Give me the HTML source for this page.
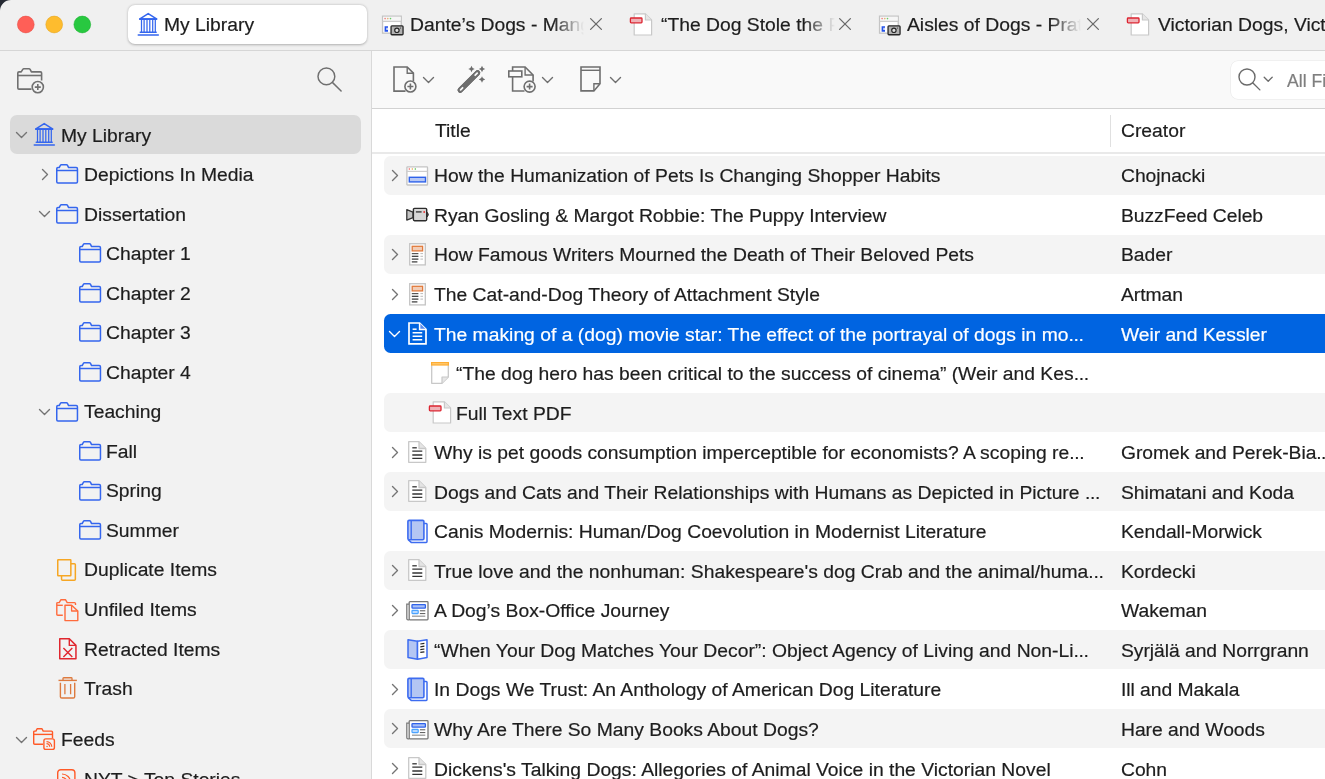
<!DOCTYPE html>
<html><head><meta charset="utf-8"><style>
html,body{margin:0;padding:0;}
body{width:1325px;height:779px;position:relative;overflow:hidden;background:#fff;font-family:"Liberation Sans",sans-serif;}
.t{position:absolute;white-space:nowrap;line-height:24px;transform:scaleX(1.006);transform-origin:0 0;-webkit-text-stroke:0.2px currentColor}
svg{overflow:visible}
</style></head><body>
<div style="position:absolute;left:0;top:0;width:1325px;height:50px;background:#f0f0f0"></div><div style="position:absolute;left:0;top:50px;width:1325px;height:1px;background:#d6d6d6"></div><svg style="position:absolute;left:0;top:0" width="110" height="50"><circle cx="25.8" cy="24.5" r="8.4" fill="#ff5f57" stroke="#e2463f" stroke-width="0.5"/><circle cx="54.2" cy="24.5" r="8.4" fill="#febc2e" stroke="#e1a116" stroke-width="0.5"/><circle cx="82.3" cy="24.5" r="8.4" fill="#28c840" stroke="#14ae2a" stroke-width="0.5"/></svg><div style="position:absolute;left:127.5px;top:4.7px;width:239.5px;height:39.5px;background:#fff;border-radius:7px;box-shadow:0 0.5px 2.5px rgba(0,0,0,0.28)"></div><svg style="position:absolute;left:137px;top:12px" width="23" height="25" viewBox="0 0 23 25" ><path d="M2.9 6.9 L11.2 1.6 L19.5 6.9 Z" fill="none" stroke="#3466ee" stroke-width="1.5" stroke-linejoin="round"/><path d="M2.9 7.1 H19.5" stroke="#3466ee" stroke-width="1.9" stroke-linecap="round"/><path d="M4.5 7.4 V20" stroke="#3466ee" stroke-width="1.25"/><path d="M7.1 7.4 V20" stroke="#3466ee" stroke-width="1.25"/><path d="M10.0 7.4 V20" stroke="#3466ee" stroke-width="1.25"/><path d="M12.8 7.4 V20" stroke="#3466ee" stroke-width="1.25"/><path d="M15.7 7.4 V20" stroke="#3466ee" stroke-width="1.25"/><path d="M18.3 7.4 V20" stroke="#3466ee" stroke-width="1.25"/><path d="M3.2 20.3 H19.2" stroke="#3466ee" stroke-width="1.4" stroke-linecap="round"/><path d="M1.3 23 H21.3" stroke="#3466ee" stroke-width="1.6" stroke-linecap="round"/></svg><div class="t" style="left:164px;top:13.20px;font-size:19.2px;color:#1d1d1d;">My Library</div><svg style="position:absolute;left:380.9px;top:13.5px" width="24" height="22" viewBox="0 0 24 22" ><rect x="1.55" y="2.15" width="18.7" height="17" fill="#fff" stroke="#c4c4c4" stroke-width="1.3"/><rect x="2.2" y="2.8" width="17.4" height="4" fill="#f6f6f6"/><path d="M1.55 7.4 H20.25" stroke="#cbcbcb" stroke-width="1.3"/><circle cx="4.1" cy="4.6" r="0.8" fill="#e77"/><circle cx="6.8" cy="4.6" r="0.8" fill="#e6b070"/><circle cx="9.5" cy="4.6" r="0.8" fill="#6c6"/><path d="M7 13 H4.4 V16.9 H7" fill="#c9d6f8" stroke="#2453ea" stroke-width="1.6"/><rect x="10.05" y="11.95" width="12" height="8.8" rx="0.9" fill="#b2b2b2" stroke="#262626" stroke-width="1.3"/><circle cx="15.9" cy="16.3" r="2.2" fill="#e0e0e0" stroke="#262626" stroke-width="1.2"/><circle cx="19.6" cy="14" r="0.55" fill="#262626"/></svg><div class="t" style="left:409.8px;top:13.20px;font-size:19.2px;color:#1d1d1d;width:173.0px;overflow:hidden;-webkit-mask-image:linear-gradient(90deg,#000 82%,transparent 100%);">Dante’s Dogs - Mango</div><svg style="position:absolute;left:589.0px;top:17.3px" width="14" height="14" viewBox="0 0 14 14" ><path d="M1.6 1.6 L12.4 12.4 M12.4 1.6 L1.6 12.4" stroke="#6a6a6a" stroke-width="1.3" stroke-linecap="round"/></svg><svg style="position:absolute;left:629.4px;top:12.5px" width="24" height="23" viewBox="0 0 24 23" ><path d="M5.2 0.8 H16.4 L22.6 7 V22 H5.2 Z" fill="#fff" stroke="#c8c8c8" stroke-width="1.2" stroke-linejoin="round"/><path d="M16.4 0.8 V7 H22.6" fill="#e6e6e6" stroke="#c8c8c8" stroke-width="1.2" stroke-linejoin="round"/><rect x="1.4" y="5" width="11.6" height="4.8" rx="0.8" fill="#efb1b6" stroke="#dc2430" stroke-width="1.3"/></svg><div class="t" style="left:660.5px;top:13.20px;font-size:19.2px;color:#1d1d1d;width:173.0px;overflow:hidden;-webkit-mask-image:linear-gradient(90deg,#000 82%,transparent 100%);">“The Dog Stole the Film”</div><svg style="position:absolute;left:837.5px;top:17.3px" width="14" height="14" viewBox="0 0 14 14" ><path d="M1.6 1.6 L12.4 12.4 M12.4 1.6 L1.6 12.4" stroke="#6a6a6a" stroke-width="1.3" stroke-linecap="round"/></svg><svg style="position:absolute;left:877.9px;top:13.5px" width="24" height="22" viewBox="0 0 24 22" ><rect x="1.55" y="2.15" width="18.7" height="17" fill="#fff" stroke="#c4c4c4" stroke-width="1.3"/><rect x="2.2" y="2.8" width="17.4" height="4" fill="#f6f6f6"/><path d="M1.55 7.4 H20.25" stroke="#cbcbcb" stroke-width="1.3"/><circle cx="4.1" cy="4.6" r="0.8" fill="#e77"/><circle cx="6.8" cy="4.6" r="0.8" fill="#e6b070"/><circle cx="9.5" cy="4.6" r="0.8" fill="#6c6"/><path d="M7 13 H4.4 V16.9 H7" fill="#c9d6f8" stroke="#2453ea" stroke-width="1.6"/><rect x="10.05" y="11.95" width="12" height="8.8" rx="0.9" fill="#b2b2b2" stroke="#262626" stroke-width="1.3"/><circle cx="15.9" cy="16.3" r="2.2" fill="#e0e0e0" stroke="#262626" stroke-width="1.2"/><circle cx="19.6" cy="14" r="0.55" fill="#262626"/></svg><div class="t" style="left:906.8px;top:13.20px;font-size:19.2px;color:#1d1d1d;width:173.0px;overflow:hidden;-webkit-mask-image:linear-gradient(90deg,#000 82%,transparent 100%);">Aisles of Dogs - Pratt</div><svg style="position:absolute;left:1086.0px;top:17.3px" width="14" height="14" viewBox="0 0 14 14" ><path d="M1.6 1.6 L12.4 12.4 M12.4 1.6 L1.6 12.4" stroke="#6a6a6a" stroke-width="1.3" stroke-linecap="round"/></svg><svg style="position:absolute;left:1126.4px;top:12.5px" width="24" height="23" viewBox="0 0 24 23" ><path d="M5.2 0.8 H16.4 L22.6 7 V22 H5.2 Z" fill="#fff" stroke="#c8c8c8" stroke-width="1.2" stroke-linejoin="round"/><path d="M16.4 0.8 V7 H22.6" fill="#e6e6e6" stroke="#c8c8c8" stroke-width="1.2" stroke-linejoin="round"/><rect x="1.4" y="5" width="11.6" height="4.8" rx="0.8" fill="#efb1b6" stroke="#dc2430" stroke-width="1.3"/></svg><div class="t" style="left:1157.5px;top:13.20px;font-size:19.2px;color:#1d1d1d;width:248.5px;overflow:hidden;">Victorian Dogs, Victorian Pets</div><div style="position:absolute;left:0;top:51px;width:371px;height:728px;background:#f2f2f2"></div><div style="position:absolute;left:371px;top:51px;width:1px;height:728px;background:#d9d9d9"></div><svg style="position:absolute;left:16.9px;top:67.9px" width="28" height="27" viewBox="0 0 28 27" ><path d="M14.5 21.1 H2 Q0.8 21.1 0.8 19.9 V5.1 Q0.8 3.9 2 3.9 H4.2 L5.8 1.4 Q6.2 0.8 6.9 0.8 H12 Q12.7 0.8 13.1 1.4 L14.4 3.9 H23.4 Q24.6 3.9 24.6 5.1 V12.5" fill="none" stroke="#707070" stroke-width="1.6" stroke-linejoin="round"/><path d="M0.8 7.5 H24.6" stroke="#707070" stroke-width="1.6"/><circle cx="20.8" cy="19.1" r="5.6" fill="#f2f2f2" stroke="#707070" stroke-width="1.6"/><path d="M20.8 16.1 V22.1 M17.8 19.1 H23.8" stroke="#707070" stroke-width="1.6"/></svg><svg style="position:absolute;left:316.8px;top:66.5px" width="27" height="27" viewBox="0 0 27 27" ><circle cx="9.4" cy="9.4" r="8.4" fill="none" stroke="#6f6f6f" stroke-width="1.45"/><path d="M15.364 15.364 L24.1 24.1" stroke="#6f6f6f" stroke-width="1.45" stroke-linecap="round"/></svg><div style="position:absolute;left:10.3px;top:115.1px;width:350.5px;height:38.5px;background:#dadada;border-radius:7px"></div><svg style="position:absolute;left:14.95px;top:130.95px" width="13" height="8" viewBox="0 0 13 8" ><path d="M1.5 1.5 L6.5 6.5 L11.5 1.5" fill="none" stroke="#747474" stroke-width="1.4" stroke-linecap="round" stroke-linejoin="round"/></svg><svg style="position:absolute;left:33.4px;top:122.3px" width="23" height="25" viewBox="0 0 23 25" ><path d="M2.9 6.9 L11.2 1.6 L19.5 6.9 Z" fill="none" stroke="#3466ee" stroke-width="1.5" stroke-linejoin="round"/><path d="M2.9 7.1 H19.5" stroke="#3466ee" stroke-width="1.9" stroke-linecap="round"/><path d="M4.5 7.4 V20" stroke="#3466ee" stroke-width="1.25"/><path d="M7.1 7.4 V20" stroke="#3466ee" stroke-width="1.25"/><path d="M10.0 7.4 V20" stroke="#3466ee" stroke-width="1.25"/><path d="M12.8 7.4 V20" stroke="#3466ee" stroke-width="1.25"/><path d="M15.7 7.4 V20" stroke="#3466ee" stroke-width="1.25"/><path d="M18.3 7.4 V20" stroke="#3466ee" stroke-width="1.25"/><path d="M3.2 20.3 H19.2" stroke="#3466ee" stroke-width="1.4" stroke-linecap="round"/><path d="M1.3 23 H21.3" stroke="#3466ee" stroke-width="1.6" stroke-linecap="round"/></svg><div class="t" style="left:61.05px;top:123.50px;font-size:19.2px;color:#1d1d1d;">My Library</div><svg style="position:absolute;left:40.7px;top:167.64px" width="8" height="13" viewBox="0 0 8 13" ><path d="M1.5 1.5 L6.5 6.5 L1.5 11.5" fill="none" stroke="#747474" stroke-width="1.4" stroke-linecap="round" stroke-linejoin="round"/></svg><svg style="position:absolute;left:56.0px;top:164.29px" width="23" height="20" viewBox="0 0 23 20" ><path d="M0.75 4.8 Q0.75 3.6 1.95 3.6 H3.2 L4.4 1.4 Q4.75 0.75 5.4 0.75 H10.5 Q11.15 0.75 11.5 1.4 L12.6 3.6 H20.25 Q21.45 3.6 21.45 4.8 V17.75 Q21.45 18.95 20.25 18.95 H1.95 Q0.75 18.95 0.75 17.75 Z" fill="none" stroke="#3466ee" stroke-width="1.5" stroke-linejoin="round"/><path d="M0.75 6.5 H21.45" stroke="#3466ee" stroke-width="1.5"/></svg><div class="t" style="left:83.6px;top:163.04px;font-size:19.2px;color:#1d1d1d;">Depictions In Media</div><svg style="position:absolute;left:37.65px;top:210.02999999999997px" width="13" height="8" viewBox="0 0 13 8" ><path d="M1.5 1.5 L6.5 6.5 L11.5 1.5" fill="none" stroke="#747474" stroke-width="1.4" stroke-linecap="round" stroke-linejoin="round"/></svg><svg style="position:absolute;left:56.0px;top:203.82999999999998px" width="23" height="20" viewBox="0 0 23 20" ><path d="M0.75 4.8 Q0.75 3.6 1.95 3.6 H3.2 L4.4 1.4 Q4.75 0.75 5.4 0.75 H10.5 Q11.15 0.75 11.5 1.4 L12.6 3.6 H20.25 Q21.45 3.6 21.45 4.8 V17.75 Q21.45 18.95 20.25 18.95 H1.95 Q0.75 18.95 0.75 17.75 Z" fill="none" stroke="#3466ee" stroke-width="1.5" stroke-linejoin="round"/><path d="M0.75 6.5 H21.45" stroke="#3466ee" stroke-width="1.5"/></svg><div class="t" style="left:83.6px;top:202.58px;font-size:19.2px;color:#1d1d1d;">Dissertation</div><svg style="position:absolute;left:78.69999999999999px;top:243.37px" width="23" height="20" viewBox="0 0 23 20" ><path d="M0.75 4.8 Q0.75 3.6 1.95 3.6 H3.2 L4.4 1.4 Q4.75 0.75 5.4 0.75 H10.5 Q11.15 0.75 11.5 1.4 L12.6 3.6 H20.25 Q21.45 3.6 21.45 4.8 V17.75 Q21.45 18.95 20.25 18.95 H1.95 Q0.75 18.95 0.75 17.75 Z" fill="none" stroke="#3466ee" stroke-width="1.5" stroke-linejoin="round"/><path d="M0.75 6.5 H21.45" stroke="#3466ee" stroke-width="1.5"/></svg><div class="t" style="left:106.15px;top:242.12px;font-size:19.2px;color:#1d1d1d;">Chapter 1</div><svg style="position:absolute;left:78.69999999999999px;top:282.90999999999997px" width="23" height="20" viewBox="0 0 23 20" ><path d="M0.75 4.8 Q0.75 3.6 1.95 3.6 H3.2 L4.4 1.4 Q4.75 0.75 5.4 0.75 H10.5 Q11.15 0.75 11.5 1.4 L12.6 3.6 H20.25 Q21.45 3.6 21.45 4.8 V17.75 Q21.45 18.95 20.25 18.95 H1.95 Q0.75 18.95 0.75 17.75 Z" fill="none" stroke="#3466ee" stroke-width="1.5" stroke-linejoin="round"/><path d="M0.75 6.5 H21.45" stroke="#3466ee" stroke-width="1.5"/></svg><div class="t" style="left:106.15px;top:281.66px;font-size:19.2px;color:#1d1d1d;">Chapter 2</div><svg style="position:absolute;left:78.69999999999999px;top:322.45px" width="23" height="20" viewBox="0 0 23 20" ><path d="M0.75 4.8 Q0.75 3.6 1.95 3.6 H3.2 L4.4 1.4 Q4.75 0.75 5.4 0.75 H10.5 Q11.15 0.75 11.5 1.4 L12.6 3.6 H20.25 Q21.45 3.6 21.45 4.8 V17.75 Q21.45 18.95 20.25 18.95 H1.95 Q0.75 18.95 0.75 17.75 Z" fill="none" stroke="#3466ee" stroke-width="1.5" stroke-linejoin="round"/><path d="M0.75 6.5 H21.45" stroke="#3466ee" stroke-width="1.5"/></svg><div class="t" style="left:106.15px;top:321.20px;font-size:19.2px;color:#1d1d1d;">Chapter 3</div><svg style="position:absolute;left:78.69999999999999px;top:361.99px" width="23" height="20" viewBox="0 0 23 20" ><path d="M0.75 4.8 Q0.75 3.6 1.95 3.6 H3.2 L4.4 1.4 Q4.75 0.75 5.4 0.75 H10.5 Q11.15 0.75 11.5 1.4 L12.6 3.6 H20.25 Q21.45 3.6 21.45 4.8 V17.75 Q21.45 18.95 20.25 18.95 H1.95 Q0.75 18.95 0.75 17.75 Z" fill="none" stroke="#3466ee" stroke-width="1.5" stroke-linejoin="round"/><path d="M0.75 6.5 H21.45" stroke="#3466ee" stroke-width="1.5"/></svg><div class="t" style="left:106.15px;top:360.74px;font-size:19.2px;color:#1d1d1d;">Chapter 4</div><svg style="position:absolute;left:37.65px;top:407.72999999999996px" width="13" height="8" viewBox="0 0 13 8" ><path d="M1.5 1.5 L6.5 6.5 L11.5 1.5" fill="none" stroke="#747474" stroke-width="1.4" stroke-linecap="round" stroke-linejoin="round"/></svg><svg style="position:absolute;left:56.0px;top:401.53px" width="23" height="20" viewBox="0 0 23 20" ><path d="M0.75 4.8 Q0.75 3.6 1.95 3.6 H3.2 L4.4 1.4 Q4.75 0.75 5.4 0.75 H10.5 Q11.15 0.75 11.5 1.4 L12.6 3.6 H20.25 Q21.45 3.6 21.45 4.8 V17.75 Q21.45 18.95 20.25 18.95 H1.95 Q0.75 18.95 0.75 17.75 Z" fill="none" stroke="#3466ee" stroke-width="1.5" stroke-linejoin="round"/><path d="M0.75 6.5 H21.45" stroke="#3466ee" stroke-width="1.5"/></svg><div class="t" style="left:83.6px;top:400.28px;font-size:19.2px;color:#1d1d1d;">Teaching</div><svg style="position:absolute;left:78.69999999999999px;top:441.07px" width="23" height="20" viewBox="0 0 23 20" ><path d="M0.75 4.8 Q0.75 3.6 1.95 3.6 H3.2 L4.4 1.4 Q4.75 0.75 5.4 0.75 H10.5 Q11.15 0.75 11.5 1.4 L12.6 3.6 H20.25 Q21.45 3.6 21.45 4.8 V17.75 Q21.45 18.95 20.25 18.95 H1.95 Q0.75 18.95 0.75 17.75 Z" fill="none" stroke="#3466ee" stroke-width="1.5" stroke-linejoin="round"/><path d="M0.75 6.5 H21.45" stroke="#3466ee" stroke-width="1.5"/></svg><div class="t" style="left:106.15px;top:439.82px;font-size:19.2px;color:#1d1d1d;">Fall</div><svg style="position:absolute;left:78.69999999999999px;top:480.61px" width="23" height="20" viewBox="0 0 23 20" ><path d="M0.75 4.8 Q0.75 3.6 1.95 3.6 H3.2 L4.4 1.4 Q4.75 0.75 5.4 0.75 H10.5 Q11.15 0.75 11.5 1.4 L12.6 3.6 H20.25 Q21.45 3.6 21.45 4.8 V17.75 Q21.45 18.95 20.25 18.95 H1.95 Q0.75 18.95 0.75 17.75 Z" fill="none" stroke="#3466ee" stroke-width="1.5" stroke-linejoin="round"/><path d="M0.75 6.5 H21.45" stroke="#3466ee" stroke-width="1.5"/></svg><div class="t" style="left:106.15px;top:479.36px;font-size:19.2px;color:#1d1d1d;">Spring</div><svg style="position:absolute;left:78.69999999999999px;top:520.15px" width="23" height="20" viewBox="0 0 23 20" ><path d="M0.75 4.8 Q0.75 3.6 1.95 3.6 H3.2 L4.4 1.4 Q4.75 0.75 5.4 0.75 H10.5 Q11.15 0.75 11.5 1.4 L12.6 3.6 H20.25 Q21.45 3.6 21.45 4.8 V17.75 Q21.45 18.95 20.25 18.95 H1.95 Q0.75 18.95 0.75 17.75 Z" fill="none" stroke="#3466ee" stroke-width="1.5" stroke-linejoin="round"/><path d="M0.75 6.5 H21.45" stroke="#3466ee" stroke-width="1.5"/></svg><div class="t" style="left:106.15px;top:518.90px;font-size:19.2px;color:#1d1d1d;">Summer</div><svg style="position:absolute;left:57.35px;top:558.5400000000001px" width="20" height="22" viewBox="0 0 20 22" ><path d="M13.85 4.75 H17.35 Q18.35 4.75 18.35 5.75 V20.25 Q18.35 21.25 17.35 21.25 H5.55 Q4.55 21.25 4.55 20.25 V16.75" fill="none" stroke="#f6a623" stroke-width="1.5"/><rect x="0.75" y="0.75" width="13.1" height="16" rx="0.5" fill="none" stroke="#f6a623" stroke-width="1.5"/></svg><div class="t" style="left:83.6px;top:558.44px;font-size:19.2px;color:#1d1d1d;">Duplicate Items</div><svg style="position:absolute;left:56px;top:598.78px" width="23" height="23" viewBox="0 0 23 23" ><path d="M6.8 16.2 H1.8 Q0.8 16.2 0.8 15.2 V4.6 Q0.8 3.6 1.8 3.6 H3.2 L4.8 0.8 H9.6 L11.2 3.6 H18.5 Q19.5 3.6 19.5 4.6 V6" fill="none" stroke="#ff6b3d" stroke-width="1.4" stroke-linejoin="round"/><path d="M0.8 6.3 H6.8" stroke="#ff6b3d" stroke-width="1.4"/><path d="M9 6.2 H15.6 L21.8 12 V21.6 H9 Z" fill="none" stroke="#ff6b3d" stroke-width="1.4" stroke-linejoin="round"/><path d="M15.6 6.2 V12 H21.8" fill="none" stroke="#ff6b3d" stroke-width="1.3" stroke-linejoin="round"/></svg><div class="t" style="left:83.6px;top:597.98px;font-size:19.2px;color:#1d1d1d;">Unfiled Items</div><svg style="position:absolute;left:58.75px;top:637.77px" width="18" height="22" viewBox="0 0 18 22" ><path d="M0.75 0.75 H10.3 L16.95 7.4 V20.85 H0.75 Z" fill="none" stroke="#e0262e" stroke-width="1.5" stroke-linejoin="round"/><path d="M10.3 0.75 V7.4 H16.95" fill="none" stroke="#e0262e" stroke-width="1.4" stroke-linejoin="round"/><path d="M4.4 10.1 L13.3 19 M13.3 10.1 L4.4 19" stroke="#e0262e" stroke-width="1.4"/></svg><div class="t" style="left:83.6px;top:637.52px;font-size:19.2px;color:#1d1d1d;">Retracted Items</div><svg style="position:absolute;left:57.8px;top:677.16px" width="20" height="22" viewBox="0 0 20 22" ><path d="M0.5 3.4 H18.9" stroke="#dd7a3e" stroke-width="1.4"/><path d="M5 3.4 V1.45 Q5 0.75 5.7 0.75 H13.3 Q14 0.75 14 1.45 V3.4" fill="none" stroke="#dd7a3e" stroke-width="1.3"/><path d="M2.4 5.8 V19.65 Q2.4 21.05 3.8 21.05 H15.3 Q16.7 21.05 16.7 19.65 V5.8" fill="none" stroke="#dd7a3e" stroke-width="1.4"/><path d="M6.9 6.9 V17.2 M12.6 6.9 V17.2" stroke="#dd7a3e" stroke-width="1.3"/></svg><div class="t" style="left:83.6px;top:677.06px;font-size:19.2px;color:#1d1d1d;">Trash</div><svg style="position:absolute;left:14.95px;top:735.5500000000001px" width="13" height="8" viewBox="0 0 13 8" ><path d="M1.5 1.5 L6.5 6.5 L11.5 1.5" fill="none" stroke="#747474" stroke-width="1.4" stroke-linecap="round" stroke-linejoin="round"/></svg><svg style="position:absolute;left:32.5px;top:728.1px" width="23" height="23" viewBox="0 0 23 23" ><path d="M10 16.3 H1.8 Q0.7 16.3 0.7 15.2 V4.1 Q0.7 3.1 1.8 3.1 H2.9 L4.1 0.7 H9 L10.2 3.1 H18.4 Q19.5 3.1 19.5 4.1 V10.2" fill="none" stroke="#ff5a28" stroke-width="1.4" stroke-linejoin="round"/><path d="M0.7 6.4 H19.5" stroke="#ff5a28" stroke-width="1.4"/><rect x="10.9" y="10.9" width="10.5" height="10.5" rx="1.89" fill="#f2f2f2" stroke="#ff5a28" stroke-width="1.4"/><circle cx="14.05" cy="18.46" r="0.7350000000000001" fill="#ff5a28"/><path d="M13.525 15.625 A3.15 3.15 0 0 1 16.675 18.775" fill="none" stroke="#ff5a28" stroke-width="1.2"/><path d="M13.525 13.525 A5.25 5.25 0 0 1 18.775 18.775" fill="none" stroke="#ff5a28" stroke-width="1.2"/></svg><div class="t" style="left:61.05px;top:728.10px;font-size:19.2px;color:#1d1d1d;">Feeds</div><svg style="position:absolute;left:57.4px;top:769.14px" width="20" height="20" viewBox="0 0 20 20" ><rect x="0.7" y="0.7" width="17.2" height="17.2" rx="3.0959999999999996" fill="#f2f2f2" stroke="#ff5a28" stroke-width="1.4"/><circle cx="5.859999999999999" cy="13.083999999999998" r="1.204" fill="#ff5a28"/><path d="M5.0 8.44 A5.159999999999999 5.159999999999999 0 0 1 10.16 13.599999999999998" fill="none" stroke="#ff5a28" stroke-width="1.2"/><path d="M5.0 5.0 A8.6 8.6 0 0 1 13.599999999999998 13.599999999999998" fill="none" stroke="#ff5a28" stroke-width="1.2"/></svg><div class="t" style="left:83.6px;top:767.64px;font-size:19.2px;color:#1d1d1d;">NYT &gt; Top Stories</div><div style="position:absolute;left:372px;top:51px;width:953px;height:57px;background:#f9f9f9"></div><div style="position:absolute;left:372px;top:107.8px;width:953px;height:1px;background:#d2d2d2"></div><div style="position:absolute;left:372px;top:108.5px;width:953px;height:671px;background:#fff"></div><div style="position:absolute;left:372px;top:152px;width:953px;height:2px;background:#e9e9e9"></div><svg style="position:absolute;left:393px;top:66.3px" width="24" height="27" viewBox="0 0 24 27" ><path d="M12.5 25.1 H1 V1 H14.2 L20.4 7.2 V15" fill="none" stroke="#6e6e6e" stroke-width="1.6" stroke-linejoin="miter"/><path d="M14.2 1 V7.2 H20.4" fill="none" stroke="#6e6e6e" stroke-width="1.4"/><circle cx="17.4" cy="20.5" r="5.5" fill="#f9f9f9" stroke="#6e6e6e" stroke-width="1.6"/><path d="M17.4 17.5 V23.5 M14.4 20.5 H20.4" stroke="#6e6e6e" stroke-width="1.6"/></svg><svg style="position:absolute;left:422px;top:75.5px" width="13" height="8" viewBox="0 0 13 8" ><path d="M1.5 1.5 L6.5 6.5 L11.5 1.5" fill="none" stroke="#6e6e6e" stroke-width="1.4" stroke-linecap="round" stroke-linejoin="round"/></svg><svg style="position:absolute;left:458px;top:65.5px" width="28" height="27" viewBox="0 0 28 27" ><path d="M13.5 -0.20000000000000018 Q14.0 2.5 16.7 3 Q14.0 3.5 13.5 6.2 Q13.0 3.5 10.3 3 Q13.0 2.5 13.5 -0.20000000000000018 Z" fill="#6e6e6e"/><path d="M2.2 24.2 L19.6 6.8" stroke="#6e6e6e" stroke-width="5.2" stroke-linecap="round"/><path d="M2.6 23.8 L4.6 21.8 M17.2 9.2 L19.2 7.2" stroke="#f9f9f9" stroke-width="1.8" stroke-linecap="round"/><path d="M24 -0.20000000000000018 Q24.5 2.5 27.2 3 Q24.5 3.5 24 6.2 Q23.5 3.5 20.8 3 Q23.5 2.5 24 -0.20000000000000018 Z" fill="#6e6e6e"/><path d="M2.2 24.2 L19.6 6.8" stroke="#6e6e6e" stroke-width="5.2" stroke-linecap="round"/><path d="M2.6 23.8 L4.6 21.8 M17.2 9.2 L19.2 7.2" stroke="#f9f9f9" stroke-width="1.8" stroke-linecap="round"/><path d="M24 10.3 Q24.5 13.0 27.2 13.5 Q24.5 14.0 24 16.7 Q23.5 14.0 20.8 13.5 Q23.5 13.0 24 10.3 Z" fill="#6e6e6e"/></svg><svg style="position:absolute;left:507.5px;top:66.3px" width="28" height="27" viewBox="0 0 28 27" ><path d="M16.5 25 H4.6 V1 H17.1 L25.1 9 V15.5" fill="none" stroke="#6e6e6e" stroke-width="1.6"/><path d="M17.1 1 V9 H25.1" fill="none" stroke="#6e6e6e" stroke-width="1.4"/><rect x="0.8" y="5" width="13" height="5.8" fill="#f9f9f9" stroke="#6e6e6e" stroke-width="1.6"/><circle cx="21.6" cy="20.6" r="5.5" fill="#f9f9f9" stroke="#6e6e6e" stroke-width="1.6"/><path d="M21.6 17.6 V23.6 M18.6 20.6 H24.6" stroke="#6e6e6e" stroke-width="1.6"/></svg><svg style="position:absolute;left:541px;top:75.5px" width="13" height="8" viewBox="0 0 13 8" ><path d="M1.5 1.5 L6.5 6.5 L11.5 1.5" fill="none" stroke="#6e6e6e" stroke-width="1.4" stroke-linecap="round" stroke-linejoin="round"/></svg><svg style="position:absolute;left:579.7px;top:66.3px" width="21" height="26" viewBox="0 0 21 26" ><path d="M13.9 24.9 H1 V1 H20 V17.8 Z" fill="none" stroke="#6e6e6e" stroke-width="1.6" stroke-linejoin="miter"/><path d="M1 4.3 H20" stroke="#6e6e6e" stroke-width="1.4"/><path d="M13.9 24.9 V17.8 H20" fill="none" stroke="#6e6e6e" stroke-width="1.4"/></svg><svg style="position:absolute;left:609px;top:75.5px" width="13" height="8" viewBox="0 0 13 8" ><path d="M1.5 1.5 L6.5 6.5 L11.5 1.5" fill="none" stroke="#6e6e6e" stroke-width="1.4" stroke-linecap="round" stroke-linejoin="round"/></svg><div style="position:absolute;left:1231px;top:60.5px;width:120px;height:38px;background:#fff;border-radius:7px;box-shadow:0 0 0 0.6px #e8e8e8"></div><svg style="position:absolute;left:1238px;top:67.5px" width="24" height="24" viewBox="0 0 24 24" ><circle cx="9.0" cy="9.0" r="8.0" fill="none" stroke="#6a6a6a" stroke-width="1.4"/><path d="M14.68 14.68 L21.88 21.88" stroke="#6a6a6a" stroke-width="1.4" stroke-linecap="round"/></svg><svg style="position:absolute;left:1263px;top:76px" width="11" height="7" viewBox="0 0 11 7" ><path d="M1.2 1.2 L5.2 5.2 L9.2 1.2" fill="none" stroke="#6a6a6a" stroke-width="1.3" stroke-linecap="round" stroke-linejoin="round"/></svg><div class="t" style="left:1287px;top:69.12px;font-size:17.5px;color:#7f7f7f;">All Fields &amp; Tags</div><div class="t" style="left:434.5px;top:119.10px;font-size:19.2px;color:#1d1d1d;">Title</div><div style="position:absolute;left:1109.5px;top:115px;width:1px;height:32px;background:#e0e0e0"></div><div class="t" style="left:1121.2px;top:119.20px;font-size:19.2px;color:#1d1d1d;">Creator</div><div style="position:absolute;left:384px;top:156.30px;width:960px;height:38.9px;background:#f4f4f4;border-radius:6.5px"></div><svg style="position:absolute;left:391.2px;top:169.1px" width="8" height="13" viewBox="0 0 8 13" ><path d="M1.5 1.5 L6.5 6.5 L1.5 11.5" fill="none" stroke="#747474" stroke-width="1.4" stroke-linecap="round" stroke-linejoin="round"/></svg><svg style="position:absolute;left:405.5px;top:165.7px" width="23" height="20" viewBox="0 0 23 20" ><rect x="0.9" y="0.9" width="20.6" height="18.1" rx="0.6" fill="#fff" stroke="#c4c4c4" stroke-width="1.3"/><path d="M0.9 5.4 H21.5" stroke="#cdcdcd" stroke-width="1.2"/><circle cx="3.3" cy="3.1" r="0.75" fill="#e55"/><circle cx="6.3" cy="3.1" r="0.75" fill="#eaa040"/><circle cx="9.3" cy="3.1" r="0.75" fill="#4b4"/><rect x="3.3" y="11.3" width="16.2" height="4.6" fill="#b7c8f5" stroke="#2e62ea" stroke-width="1.4"/></svg><div class="t" style="left:434.3px;top:164.30px;font-size:19.2px;color:#1d1d1d;width:669.7px;overflow:hidden;">How the Humanization of Pets Is Changing Shopper Habits</div><div class="t" style="left:1121px;top:164.30px;font-size:19.2px;color:#1d1d1d;letter-spacing:-0.05px;">Chojnacki</div><svg style="position:absolute;left:405.5px;top:208.3px" width="24" height="14" viewBox="0 0 24 14" ><path d="M0.8 1.7 L7 4.2 V9.7 L0.8 12.1 Z" fill="#c4c4c4" stroke="#333" stroke-width="1.3" stroke-linejoin="round"/><rect x="7.4" y="0.4" width="13.3" height="12.3" rx="1.1" fill="#d6d6d6" stroke="#2c2c2c" stroke-width="1.4"/><path d="M9.9 3.9 H15.6" stroke="#444" stroke-width="1.5"/><circle cx="18.2" cy="4" r="0.9" fill="#e33"/><path d="M21.3 4.3 Q23.6 6.6 21.3 8.9 Z" fill="#2c2c2c" stroke="#2c2c2c" stroke-width="0.8"/></svg><div class="t" style="left:434.3px;top:203.85px;font-size:19.2px;color:#1d1d1d;width:669.7px;overflow:hidden;">Ryan Gosling &amp; Margot Robbie: The Puppy Interview</div><div class="t" style="left:1121px;top:203.85px;font-size:19.2px;color:#1d1d1d;letter-spacing:-0.05px;">BuzzFeed Celeb</div><div style="position:absolute;left:384px;top:235.30px;width:960px;height:38.9px;background:#f4f4f4;border-radius:6.5px"></div><svg style="position:absolute;left:391.2px;top:248.1px" width="8" height="13" viewBox="0 0 8 13" ><path d="M1.5 1.5 L6.5 6.5 L1.5 11.5" fill="none" stroke="#747474" stroke-width="1.4" stroke-linecap="round" stroke-linejoin="round"/></svg><svg style="position:absolute;left:408.6px;top:243.4px" width="17" height="23" viewBox="0 0 17 23" ><rect x="0.7" y="0.7" width="15.6" height="21.2" fill="#fff" stroke="#c4c4c4" stroke-width="1.3"/><rect x="3.2" y="3.3" width="10.4" height="4.6" fill="#f2cdb6" stroke="#e07a3c" stroke-width="1.3"/><path d="M2.8 10.6 H9.4" stroke="#555" stroke-width="1.2"/><path d="M11.4 10.6 H14" stroke="#bbb" stroke-width="1"/><path d="M2.8 13.3 H9.4" stroke="#333" stroke-width="1.2"/><path d="M11.4 13.3 H14" stroke="#bbb" stroke-width="1"/><path d="M2.8 16.1 H9.4" stroke="#333" stroke-width="1.2"/><path d="M11.4 16.1 H14" stroke="#bbb" stroke-width="1"/><path d="M2.8 18.9 H8.4" stroke="#333" stroke-width="1.2"/></svg><div class="t" style="left:434.3px;top:243.40px;font-size:19.2px;color:#1d1d1d;width:669.7px;overflow:hidden;">How Famous Writers Mourned the Death of Their Beloved Pets</div><div class="t" style="left:1121px;top:243.40px;font-size:19.2px;color:#1d1d1d;letter-spacing:-0.05px;">Bader</div><svg style="position:absolute;left:391.2px;top:287.6px" width="8" height="13" viewBox="0 0 8 13" ><path d="M1.5 1.5 L6.5 6.5 L1.5 11.5" fill="none" stroke="#747474" stroke-width="1.4" stroke-linecap="round" stroke-linejoin="round"/></svg><svg style="position:absolute;left:408.6px;top:282.9px" width="17" height="23" viewBox="0 0 17 23" ><rect x="0.7" y="0.7" width="15.6" height="21.2" fill="#fff" stroke="#c4c4c4" stroke-width="1.3"/><rect x="3.2" y="3.3" width="10.4" height="4.6" fill="#f2cdb6" stroke="#e07a3c" stroke-width="1.3"/><path d="M2.8 10.6 H9.4" stroke="#555" stroke-width="1.2"/><path d="M11.4 10.6 H14" stroke="#bbb" stroke-width="1"/><path d="M2.8 13.3 H9.4" stroke="#333" stroke-width="1.2"/><path d="M11.4 13.3 H14" stroke="#bbb" stroke-width="1"/><path d="M2.8 16.1 H9.4" stroke="#333" stroke-width="1.2"/><path d="M11.4 16.1 H14" stroke="#bbb" stroke-width="1"/><path d="M2.8 18.9 H8.4" stroke="#333" stroke-width="1.2"/></svg><div class="t" style="left:434.3px;top:282.95px;font-size:19.2px;color:#1d1d1d;width:669.7px;overflow:hidden;">The Cat-and-Dog Theory of Attachment Style</div><div class="t" style="left:1121px;top:282.95px;font-size:19.2px;color:#1d1d1d;letter-spacing:-0.05px;">Artman</div><div style="position:absolute;left:384px;top:314.30px;width:960px;height:39.2px;background:#0064e1;border-radius:6.5px"></div><svg style="position:absolute;left:388.3px;top:329.7px" width="13" height="8" viewBox="0 0 13 8" ><path d="M1.5 1.5 L6.5 6.5 L11.5 1.5" fill="none" stroke="#fff" stroke-width="1.4" stroke-linecap="round" stroke-linejoin="round"/></svg><svg style="position:absolute;left:408.1px;top:322.0px" width="19" height="23" viewBox="0 0 19 23" ><path d="M1 1 H11.6 L18 7.4 V21.8 H1 Z" fill="none" stroke="#fff" stroke-width="1.7" stroke-linejoin="miter"/><path d="M11.6 1 V7.4 H18" fill="#5b8ef0" stroke="#fff" stroke-width="1.5"/><path d="M4.6 7.2 H8.6" stroke="#fff" stroke-width="1.5"/><path d="M4.6 10.7 H14.2 M4.6 14.2 H14.2 M4.6 17.7 H14.2" stroke="#fff" stroke-width="1.5"/></svg><div class="t" style="left:434.3px;top:322.50px;font-size:19.2px;color:#fff;width:669.7px;overflow:hidden;">The making of a (dog) movie star: The effect of the portrayal of dogs in mo<span style="letter-spacing:-0.3px">...</span></div><div class="t" style="left:1121px;top:322.50px;font-size:19.2px;color:#fff;letter-spacing:-0.05px;">Weir and Kessler</div><svg style="position:absolute;left:431px;top:362.4px" width="18" height="22" viewBox="0 0 18 22" ><path d="M0.7 2 V21.3 H11 L17.3 15 V2" fill="#fff" stroke="#c8c8c8" stroke-width="1.3" stroke-linejoin="round"/><path d="M11 21.3 V15 H17.3" fill="#e6e6e6" stroke="#c8c8c8" stroke-width="1.2" stroke-linejoin="round"/><rect x="0" y="0" width="18" height="3.6" fill="#ffad33"/><path d="M1.2 1.8 H16.8" stroke="#ffd58a" stroke-width="0.9"/></svg><div class="t" style="left:456.2px;top:362.05px;font-size:19.2px;color:#1d1d1d;width:647.9px;overflow:hidden;">“The dog hero has been critical to the success of cinema” (Weir and Kes<span style="letter-spacing:-0.3px">...</span></div><div style="position:absolute;left:384px;top:393.30px;width:960px;height:38.9px;background:#f4f4f4;border-radius:6.5px"></div><svg style="position:absolute;left:428px;top:401.3px" width="24" height="23" viewBox="0 0 24 23" ><path d="M5.2 0.8 H16.4 L22.6 7 V22 H5.2 Z" fill="#fff" stroke="#c8c8c8" stroke-width="1.2" stroke-linejoin="round"/><path d="M16.4 0.8 V7 H22.6" fill="#e6e6e6" stroke="#c8c8c8" stroke-width="1.2" stroke-linejoin="round"/><rect x="1.4" y="5" width="11.6" height="4.8" rx="0.8" fill="#efb1b6" stroke="#dc2430" stroke-width="1.3"/></svg><div class="t" style="left:456.2px;top:401.60px;font-size:19.2px;color:#1d1d1d;width:647.9px;overflow:hidden;">Full Text PDF</div><svg style="position:absolute;left:391.2px;top:445.6px" width="8" height="13" viewBox="0 0 8 13" ><path d="M1.5 1.5 L6.5 6.5 L1.5 11.5" fill="none" stroke="#747474" stroke-width="1.4" stroke-linecap="round" stroke-linejoin="round"/></svg><svg style="position:absolute;left:407.9px;top:440.9px" width="19" height="22" viewBox="0 0 19 22" ><path d="M0.7 0.7 H11 L17.8 7.5 V21.3 H0.7 Z" fill="#fff" stroke="#c8c8c8" stroke-width="1.3" stroke-linejoin="round"/><path d="M11 0.7 V7.5 H17.8" fill="#e4e4e4" stroke="#c8c8c8" stroke-width="1.3" stroke-linejoin="round"/><path d="M4.3 6.8 H8.8" stroke="#333" stroke-width="1.3"/><path d="M4.3 10.2 H14.3 M4.3 14 H14.3 M4.3 17.4 H14.3" stroke="#333" stroke-width="1.3"/></svg><div class="t" style="left:434.3px;top:441.15px;font-size:19.2px;color:#1d1d1d;width:669.7px;overflow:hidden;">Why is pet goods consumption imperceptible for economists? A scoping re<span style="letter-spacing:-0.3px">...</span></div><div class="t" style="left:1121px;top:441.15px;font-size:19.2px;color:#1d1d1d;letter-spacing:-0.05px;">Gromek and Perek-Bia<span style="letter-spacing:-0.8px">...</span></div><div style="position:absolute;left:384px;top:472.30px;width:960px;height:38.9px;background:#f4f4f4;border-radius:6.5px"></div><svg style="position:absolute;left:391.2px;top:485.1px" width="8" height="13" viewBox="0 0 8 13" ><path d="M1.5 1.5 L6.5 6.5 L1.5 11.5" fill="none" stroke="#747474" stroke-width="1.4" stroke-linecap="round" stroke-linejoin="round"/></svg><svg style="position:absolute;left:407.9px;top:480.4px" width="19" height="22" viewBox="0 0 19 22" ><path d="M0.7 0.7 H11 L17.8 7.5 V21.3 H0.7 Z" fill="#fff" stroke="#c8c8c8" stroke-width="1.3" stroke-linejoin="round"/><path d="M11 0.7 V7.5 H17.8" fill="#e4e4e4" stroke="#c8c8c8" stroke-width="1.3" stroke-linejoin="round"/><path d="M4.3 6.8 H8.8" stroke="#333" stroke-width="1.3"/><path d="M4.3 10.2 H14.3 M4.3 14 H14.3 M4.3 17.4 H14.3" stroke="#333" stroke-width="1.3"/></svg><div class="t" style="left:434.3px;top:480.70px;font-size:19.2px;color:#1d1d1d;width:669.7px;overflow:hidden;">Dogs and Cats and Their Relationships with Humans as Depicted in Picture <span style="letter-spacing:-0.3px">...</span></div><div class="t" style="left:1121px;top:480.70px;font-size:19.2px;color:#1d1d1d;letter-spacing:-0.05px;">Shimatani and Koda</div><svg style="position:absolute;left:407px;top:520.0px" width="21" height="23" viewBox="0 0 21 23" ><path d="M4 3.4 H19.2 Q20 3.4 20 4.2 V21.6 Q20 22.4 19.2 22.4 H4.2 L1.2 19.6" fill="#fff" stroke="#3d6cf0" stroke-width="1.5" stroke-linejoin="round"/><rect x="0.9" y="0.4" width="16" height="19.3" rx="1.2" fill="#b4c6f3" stroke="#3d6cf0" stroke-width="1.6"/><path d="M4.2 0.9 V19.3" stroke="#3d6cf0" stroke-width="1.4"/></svg><div class="t" style="left:434.3px;top:520.25px;font-size:19.2px;color:#1d1d1d;width:669.7px;overflow:hidden;">Canis Modernis: Human/Dog Coevolution in Modernist Literature</div><div class="t" style="left:1121px;top:520.25px;font-size:19.2px;color:#1d1d1d;letter-spacing:-0.05px;">Kendall-Morwick</div><div style="position:absolute;left:384px;top:551.30px;width:960px;height:38.9px;background:#f4f4f4;border-radius:6.5px"></div><svg style="position:absolute;left:391.2px;top:564.1px" width="8" height="13" viewBox="0 0 8 13" ><path d="M1.5 1.5 L6.5 6.5 L1.5 11.5" fill="none" stroke="#747474" stroke-width="1.4" stroke-linecap="round" stroke-linejoin="round"/></svg><svg style="position:absolute;left:407.9px;top:559.4px" width="19" height="22" viewBox="0 0 19 22" ><path d="M0.7 0.7 H11 L17.8 7.5 V21.3 H0.7 Z" fill="#fff" stroke="#c8c8c8" stroke-width="1.3" stroke-linejoin="round"/><path d="M11 0.7 V7.5 H17.8" fill="#e4e4e4" stroke="#c8c8c8" stroke-width="1.3" stroke-linejoin="round"/><path d="M4.3 6.8 H8.8" stroke="#333" stroke-width="1.3"/><path d="M4.3 10.2 H14.3 M4.3 14 H14.3 M4.3 17.4 H14.3" stroke="#333" stroke-width="1.3"/></svg><div class="t" style="left:434.3px;top:559.80px;font-size:19.2px;color:#1d1d1d;width:669.7px;overflow:hidden;">True love and the nonhuman: Shakespeare's dog Crab and the animal/huma<span style="letter-spacing:-0.3px">...</span></div><div class="t" style="left:1121px;top:559.80px;font-size:19.2px;color:#1d1d1d;letter-spacing:-0.05px;">Kordecki</div><svg style="position:absolute;left:391.2px;top:603.6px" width="8" height="13" viewBox="0 0 8 13" ><path d="M1.5 1.5 L6.5 6.5 L1.5 11.5" fill="none" stroke="#747474" stroke-width="1.4" stroke-linecap="round" stroke-linejoin="round"/></svg><svg style="position:absolute;left:405.8px;top:601.0px" width="23" height="20" viewBox="0 0 23 20" ><path d="M3.2 3.2 H0.8 V17.6 Q0.8 18.8 2 18.8 H3.2" fill="#fff" stroke="#7a7a7a" stroke-width="1.3"/><rect x="3.2" y="0.7" width="18.8" height="18.1" rx="0.8" fill="#fff" stroke="#777" stroke-width="1.3"/><rect x="6" y="3.7" width="13.4" height="3.4" rx="0.6" fill="#a9c0f6" stroke="#2f62ea" stroke-width="1.3"/><rect x="6" y="9.4" width="6.2" height="3.2" rx="0.5" fill="#b8d9ff" stroke="#4aa3ff" stroke-width="1.2"/><path d="M13.9 9.8 H19.3 M13.9 12.6 H19.3" stroke="#555" stroke-width="1"/><path d="M6 15.2 H19.3" stroke="#9a9a9a" stroke-width="1.3"/></svg><div class="t" style="left:434.3px;top:599.35px;font-size:19.2px;color:#1d1d1d;width:669.7px;overflow:hidden;">A Dog’s Box-Office Journey</div><div class="t" style="left:1121px;top:599.35px;font-size:19.2px;color:#1d1d1d;letter-spacing:-0.05px;">Wakeman</div><div style="position:absolute;left:384px;top:630.30px;width:960px;height:38.9px;background:#f4f4f4;border-radius:6.5px"></div><svg style="position:absolute;left:406.6px;top:638.8px" width="21" height="21" viewBox="0 0 21 21" ><path d="M10.5 2.3 L1 0.8 V18.6 L10.5 20.2 Z" fill="#b4c6f3" stroke="#3d6cf0" stroke-width="1.5" stroke-linejoin="round"/><path d="M10.5 2.3 L20 0.8 V18.6 L10.5 20.2 Z" fill="#fff" stroke="#3d6cf0" stroke-width="1.5" stroke-linejoin="round"/><path d="M13.3 5 L17.4 4.3 M13.3 7.8 L17.4 7.2 M13.3 10.6 L17.4 10 M13.3 13.4 L17.4 12.8" stroke="#222" stroke-width="1.2"/></svg><div class="t" style="left:434.3px;top:638.90px;font-size:19.2px;color:#1d1d1d;width:669.7px;overflow:hidden;">“When Your Dog Matches Your Decor”: Object Agency of Living and Non-Li<span style="letter-spacing:-0.3px">...</span></div><div class="t" style="left:1121px;top:638.90px;font-size:19.2px;color:#1d1d1d;letter-spacing:-0.05px;">Syrjälä and Norrgrann</div><svg style="position:absolute;left:391.2px;top:682.6px" width="8" height="13" viewBox="0 0 8 13" ><path d="M1.5 1.5 L6.5 6.5 L1.5 11.5" fill="none" stroke="#747474" stroke-width="1.4" stroke-linecap="round" stroke-linejoin="round"/></svg><svg style="position:absolute;left:407px;top:678.0px" width="21" height="23" viewBox="0 0 21 23" ><path d="M4 3.4 H19.2 Q20 3.4 20 4.2 V21.6 Q20 22.4 19.2 22.4 H4.2 L1.2 19.6" fill="#fff" stroke="#3d6cf0" stroke-width="1.5" stroke-linejoin="round"/><rect x="0.9" y="0.4" width="16" height="19.3" rx="1.2" fill="#b4c6f3" stroke="#3d6cf0" stroke-width="1.6"/><path d="M4.2 0.9 V19.3" stroke="#3d6cf0" stroke-width="1.4"/></svg><div class="t" style="left:434.3px;top:678.45px;font-size:19.2px;color:#1d1d1d;width:669.7px;overflow:hidden;">In Dogs We Trust: An Anthology of American Dog Literature</div><div class="t" style="left:1121px;top:678.45px;font-size:19.2px;color:#1d1d1d;letter-spacing:-0.05px;">Ill and Makala</div><div style="position:absolute;left:384px;top:709.30px;width:960px;height:38.9px;background:#f4f4f4;border-radius:6.5px"></div><svg style="position:absolute;left:391.2px;top:722.1px" width="8" height="13" viewBox="0 0 8 13" ><path d="M1.5 1.5 L6.5 6.5 L1.5 11.5" fill="none" stroke="#747474" stroke-width="1.4" stroke-linecap="round" stroke-linejoin="round"/></svg><svg style="position:absolute;left:405.8px;top:719.5px" width="23" height="20" viewBox="0 0 23 20" ><path d="M3.2 3.2 H0.8 V17.6 Q0.8 18.8 2 18.8 H3.2" fill="#fff" stroke="#7a7a7a" stroke-width="1.3"/><rect x="3.2" y="0.7" width="18.8" height="18.1" rx="0.8" fill="#fff" stroke="#777" stroke-width="1.3"/><rect x="6" y="3.7" width="13.4" height="3.4" rx="0.6" fill="#a9c0f6" stroke="#2f62ea" stroke-width="1.3"/><rect x="6" y="9.4" width="6.2" height="3.2" rx="0.5" fill="#b8d9ff" stroke="#4aa3ff" stroke-width="1.2"/><path d="M13.9 9.8 H19.3 M13.9 12.6 H19.3" stroke="#555" stroke-width="1"/><path d="M6 15.2 H19.3" stroke="#9a9a9a" stroke-width="1.3"/></svg><div class="t" style="left:434.3px;top:718.00px;font-size:19.2px;color:#1d1d1d;width:669.7px;overflow:hidden;">Why Are There So Many Books About Dogs?</div><div class="t" style="left:1121px;top:718.00px;font-size:19.2px;color:#1d1d1d;letter-spacing:-0.05px;">Hare and Woods</div><svg style="position:absolute;left:391.2px;top:761.6px" width="8" height="13" viewBox="0 0 8 13" ><path d="M1.5 1.5 L6.5 6.5 L1.5 11.5" fill="none" stroke="#747474" stroke-width="1.4" stroke-linecap="round" stroke-linejoin="round"/></svg><svg style="position:absolute;left:407.9px;top:756.9px" width="19" height="22" viewBox="0 0 19 22" ><path d="M0.7 0.7 H11 L17.8 7.5 V21.3 H0.7 Z" fill="#fff" stroke="#c8c8c8" stroke-width="1.3" stroke-linejoin="round"/><path d="M11 0.7 V7.5 H17.8" fill="#e4e4e4" stroke="#c8c8c8" stroke-width="1.3" stroke-linejoin="round"/><path d="M4.3 6.8 H8.8" stroke="#333" stroke-width="1.3"/><path d="M4.3 10.2 H14.3 M4.3 14 H14.3 M4.3 17.4 H14.3" stroke="#333" stroke-width="1.3"/></svg><div class="t" style="left:434.3px;top:757.55px;font-size:19.2px;color:#1d1d1d;width:669.7px;overflow:hidden;">Dickens's Talking Dogs: Allegories of Animal Voice in the Victorian Novel</div><div class="t" style="left:1121px;top:757.55px;font-size:19.2px;color:#1d1d1d;letter-spacing:-0.05px;">Cohn</div><svg style="position:absolute;left:0;top:0" width="12" height="12"><path d="M0 0 H11 A11 11 0 0 0 0 11 Z" fill="#262a33"/></svg>
</body></html>
